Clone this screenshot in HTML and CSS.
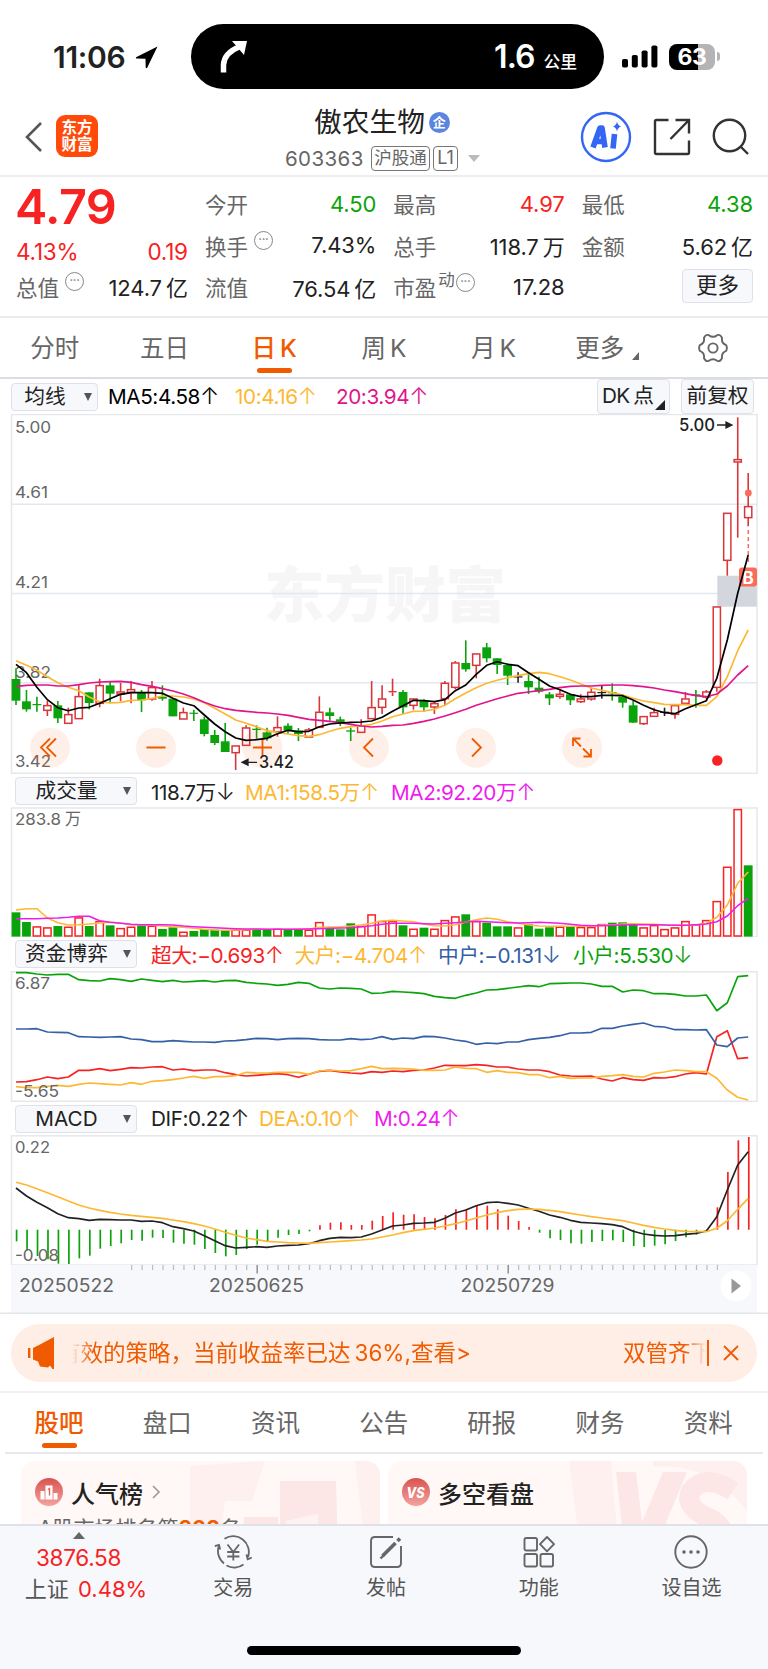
FILE: index.html
```html
<!DOCTYPE html>
<html lang="zh-CN">
<head>
<meta charset="utf-8">
<title>傲农生物 603363</title>
<link rel="stylesheet" href="styles.css">
</head>
<body>
<div class="status">
  <div class="clock"><span>11:06</span>
    <svg width="24" height="24" viewBox="0 0 24 24"><path d="M22.500 1.500 1.500 12c-1 .6-.8 1.500.3 1.600l8.700.2.200 8.500c.1 1.100 1 1.200 1.600.2Z"/></svg>
  </div>
  <div class="island">
    <svg width="30" height="34" viewBox="0 0 30 34"><path d="M4.500 32.500V25Q5 13 20 7" fill="none" stroke="#fff" stroke-width="5.500"/><path d="M13 1h15l-3 14Z" fill="#fff"/></svg>
    <div class="dist"><b>1.6</b><span>公里</span></div>
  </div>
  <div class="signal">
    <svg width="36" height="24" viewBox="0 0 36 24"><rect x="0" y="14" width="6" height="8.500" rx="1.800"/><rect x="9.800" y="10" width="6" height="12.500" rx="1.800"/><rect x="19.600" y="5.500" width="6" height="17" rx="1.800"/><rect x="29.400" y=".5" width="6" height="22" rx="1.800"/></svg>
    <div class="battery"><b>63</b></div><i class="nub"></i>
  </div>
</div>

<header class="top">
  <svg class="back" width="18" height="32" viewBox="0 0 18 32"><path d="M16 2 2 16l14 14" fill="none" stroke="#555" stroke-width="2.600"/></svg>
  <div class="logo">东方<br>财富</div>
  <div class="title">
    <div class="name">傲农生物<span class="qi">企</span></div>
    <div class="code"><span class="num">603363</span><span class="tag">沪股通</span><span class="tag l1">L1</span><i></i></div>
  </div>
  <div class="tools">
    <svg width="52" height="52" viewBox="0 0 52 52"><circle cx="26" cy="26" r="24" fill="none" stroke="#3466f6" stroke-width="2.400"/><g fill="none" stroke="#3466f6" stroke-width="5.600" stroke-linecap="butt" stroke-linejoin="round"><path d="M13 36.500 20 17h2l3 19.500M16 30.500h8M34.500 23l-1.500 14.500"/></g><path d="M37 10.500q.8 4.200 4.300 5-3.500.8-4.300 5-.8-4.200-4.300-5 3.500-.8 4.300-5Z" fill="#3466f6"/></svg>
    <svg width="38" height="38" viewBox="0 0 38 38" fill="none" stroke="#333" stroke-width="2.400"><path d="M15.500 2H3.500Q2 2 2 3.500v31Q2 36 3.500 36h31q1.500 0 1.500-1.500V22.500M22.500 2H36v13.500M36 2 17.500 21"/></svg>
    <svg width="38" height="38" viewBox="0 0 38 38" fill="none" stroke="#333" stroke-width="2.400"><circle cx="17.500" cy="17.500" r="15.700"/><path d="M28.500 28.500 36 36"/></svg>
  </div>
</header>

<section class="quote">
  <div class="q-first">
    <div class="price">4.79</div>
    <div class="chg"><span>4.13%</span><span>0.19</span></div>
    <div class="cell last"><label>总值<i class="tip">···</i></label><span>124.7<u>亿</u></span></div>
  </div>
  <div class="q-col">
    <div class="cell"><label>今开</label><span class="dn">4.50</span></div>
    <div class="cell"><label>换手<i class="tip">···</i></label><span>7.43%</span></div>
    <div class="cell"><label>流值</label><span>76.54<u>亿</u></span></div>
  </div>
  <div class="q-col">
    <div class="cell"><label>最高</label><span class="up">4.97</span></div>
    <div class="cell"><label>总手</label><span>118.7<u>万</u></span></div>
    <div class="cell"><label>市盈<sup>动</sup><i class="tip">···</i></label><span>17.28</span></div>
  </div>
  <div class="q-col">
    <div class="cell"><label>最低</label><span class="dn">4.38</span></div>
    <div class="cell"><label>金额</label><span>5.62<u>亿</u></span></div>
    <div class="cell end"><span class="more">更多</span></div>
  </div>
</section>

<nav class="periods">
  <span>分时</span><span>五日</span><span class="on">日<u>K</u></span><span>周<u>K</u></span><span>月<u>K</u></span><span class="has-sub">更多</span>
  <span><svg width="30" height="30" viewBox="-15 -15 30 30" fill="none" stroke="#666" stroke-width="1.900"><path d="M13.200 2.800Q8.200 4.750 9.030 10.030 7.250 14 4.170 12.840 0 9.500-4.170 12.840-7.250 14-9.030 10.030-8.200 4.750-13.200 2.800-14.500 0-13.200-2.800-8.200-4.750-9.030-10.030-7.250-14-4.170-12.840 0-9.500 4.170-12.840 7.250-14 9.030-10.030 8.200-4.750 13.200-2.800 14.500 0 13.200 2.800Z" stroke-linejoin="round"/><circle r="4.600"/></svg></span>
</nav>

<div class="bar bar-ma">
  <span class="sel s1">均线</span>
  <span class="v black">MA5:4.58<em>↑</em></span><span class="v amber">10:4.16<em>↑</em></span><span class="v pink">20:3.94<em>↑</em></span>
  <span class="btn dk">DK<u>点</u></span><span class="btn">前复权</span>
</div>
<svg id="kline" class="chart" width="768" height="360" viewBox="0 414 768 360"></svg>

<div class="bar bar-vol">
  <span class="sel">成交量</span>
  <span class="v ink">118.7万<em>↓</em></span><span class="v amber">MA1:158.5万<em>↑</em></span><span class="v violet">MA2:92.20万<em>↑</em></span>
</div>
<svg id="volume" class="chart" width="768" height="130" viewBox="0 807 768 130"></svg>

<div class="bar bar-fund">
  <span class="sel">资金博弈</span>
  <span class="v red">超大:−0.693<em>↑</em></span><span class="v amber">大户:−4.704<em>↑</em></span><span class="v blue">中户:−0.131<em>↓</em></span><span class="v green">小户:5.530<em>↓</em></span>
</div>
<svg id="funds" class="chart" width="768" height="131" viewBox="0 971 768 131"></svg>

<div class="bar bar-macd">
  <span class="sel">MACD</span>
  <span class="v ink">DIF:0.22<em>↑</em></span><span class="v amber">DEA:0.10<em>↑</em></span><span class="v violet">M:0.24<em>↑</em></span>
</div>
<svg id="macd" class="chart" width="768" height="179" viewBox="0 1135 768 179"></svg>

<div class="notice-wrap">
  <div class="notice">
    <svg width="28" height="34" viewBox="0 0 28 34" fill="#f05a00"><path d="M0 12h2.400v10H0zM5 12l5-2.500L26 1v32h-1.500L22 29.500l-2 2-8-1-2-5L5 23.500Z"/></svg>
    <div class="marquee"><span class="m1">有效的策略，当前收益率已达<u>36%</u>,查看&gt;</span><span class="m2">双管齐下</span></div>
    <i class="sep"></i>
    <svg width="16" height="16" viewBox="0 0 16 16" stroke="#f05a00" stroke-width="1.800"><path d="M1 1l14 14M15 1 1 15"/></svg>
  </div>
</div>

<nav class="tabs"><span class="on">股吧</span><span>盘口</span><span>资讯</span><span>公告</span><span>研报</span><span>财务</span><span>资料</span></nav>

<div class="cards">
  <div class="card">
    <svg class="deco" width="190" height="93" viewBox="0 0 190 93"><path d="M0 5 75 0 62 40H35L28 93H0ZM165 0h25v93h-14Z" fill="#fdf0ef"/><path d="M90 20h56l2 73H90ZM54 56h34v37H52Z" fill="#fce7e6"/><path d="M96 60l32-7v40h-14V62l-18 6Z" fill="#fff3f1"/></svg>
    <div class="ch"><svg width="28" height="28" viewBox="0 0 28 28"><circle cx="14" cy="14" r="14" fill="url(#rg)"/><path fill="#fff" d="M5.500 13h4v8.500h-4zM18.500 15h4v6.500h-4z"/><path fill="#fff" d="M10.500 7.500h7v14h-7z"/><path d="M13 11.500l1.500-1v7" fill="none" stroke="#e0605c" stroke-width="1.400"/></svg><b>人气榜</b><svg width="10" height="14" viewBox="0 0 10 14"><path d="M2 1l6 6-6 6" fill="none" stroke="#999" stroke-width="1.600"/></svg></div>
    <div class="sub">A股市场排名第<b>308</b>名</div>
  </div>
  <div class="card">
    <svg class="deco" width="178" height="93" viewBox="0 0 178 93"><path d="M0 0h42L50 93H12ZM84 0h94v50Q140 0 84 6Z" fill="#fdf0ef"/><path d="M47 11h20l6 50L94 11h24L84 93H56Z" fill="#fce7e6"/><path d="M164 30q-28-18-42 0-8 16 20 28 22 12 2 36" fill="none" stroke="#fce7e6" stroke-width="20"/></svg>
    <div class="ch"><svg width="28" height="28" viewBox="0 0 28 28"><defs><linearGradient id="rg" x2="0" y2="1"><stop stop-color="#d9534f"/><stop offset="1" stop-color="#f3a39f"/></linearGradient></defs><circle cx="14" cy="14" r="14" fill="url(#rg)"/><text x="13.500" y="19.500" class="vs" textLength="18" lengthAdjust="spacingAndGlyphs">VS</text></svg><b>多空看盘</b></div>
  </div>
</div>

<footer class="dock">
  <div class="index"><i></i><b>3876.58</b><span>上证 <em>0.48%</em></span></div>
  <div class="item"><svg width="38" height="34" viewBox="0 0 38 34" fill="none" stroke="#666" stroke-width="1.800"><path d="M10 28.500A15.700 15.700 0 0 1 5 10.500M.8 11.200 5 9.800l1.200 4.700M10.500 3.800A15.700 15.700 0 0 1 34 22M32.500 19.500l1.200 4.800 4-1.600M29.500 29.500A15.700 15.700 0 0 1 12.500 30.500"/><path d="M13.500 9.500l5.800 7.500 5.800-7.500M13.200 17h12.200M13.200 21.500h12.200M19.300 17v8.500"/></svg><span>交易</span></div>
  <div class="item"><svg width="34" height="34" viewBox="0 0 34 34" fill="none" stroke="#666" stroke-width="1.900"><path d="M24 2H6Q2 2 2 6v22q0 4 4 4h22q4 0 4-4V11"/><path d="M13.500 21 26.500 8M28.500 6l2.500-2.500" stroke-width="3.600"/><path d="M11.500 23.500l3-3" stroke-width="2.400"/></svg><span>发帖</span></div>
  <div class="item"><svg width="32" height="34" viewBox="0 0 32 34" fill="none" stroke="#666" stroke-width="1.900"><rect x="1.500" y="3" width="12.500" height="12.500" rx="1.800"/><rect x="1.500" y="19" width="12.500" height="12.500" rx="1.800"/><rect x="17.500" y="19" width="12.500" height="12.500" rx="1.800"/><path d="M24 2 31 9.200l-7 7.200-7-7.200Z" stroke-linejoin="round"/></svg><span>功能</span></div>
  <div class="item"><svg width="34" height="34" viewBox="0 0 34 34"><circle cx="17" cy="17" r="15.700" fill="none" stroke="#666" stroke-width="1.900"/><g fill="#666"><circle cx="10" cy="17" r="1.800"/><circle cx="17" cy="17" r="1.800"/><circle cx="24" cy="17" r="1.800"/></g></svg><span>设自选</span></div>
  <div class="home"></div>
</footer>
<script src="charts.js"></script>
</body>
</html>
```
FILE: styles.css
```css
* { box-sizing: border-box; }
body { margin: 0; width: 768px; height: 1669px; overflow: hidden; background: #fff; color: #222; font-family: Inter, "Noto Sans CJK SC", sans-serif; display: flex; flex-direction: column; }
body > * { flex: none; }
svg { display: block; }
i, em { font-style: normal; }
u { text-decoration: none; margin-left: 4px; }

.status { height: 103px; display: flex; align-items: flex-start; padding-top: 24px; }
.clock { width: 191px; height: 65px; display: flex; align-items: center; padding-left: 53px; gap: 6px; font-size: 30px; font-weight: 600; letter-spacing: -.3px; }
.clock span { width: 76px; white-space: nowrap; }
.island { width: 413px; height: 65px; border-radius: 33px; background: #000; color: #fff; display: flex; align-items: center; justify-content: space-between; padding: 0 27px 0 28px; }
.dist { display: flex; align-items: baseline; gap: 9px; }
.dist b { font-size: 32px; font-weight: 600; letter-spacing: -1px; }
.dist span { font-size: 16.800px; font-weight: 500; }
.signal { height: 65px; display: flex; align-items: center; padding-left: 18px; }
.battery { margin-left: 11px; width: 46px; height: 26px; border-radius: 8px; background: linear-gradient(90deg, #000 0 63%, #b4b4b6 63%); color: #fff; font-size: 23px; line-height: 26px; text-align: center; }
.battery b { font-weight: 700; letter-spacing: -.5px; }
.nub { width: 3px; height: 9px; margin-left: 2px; border-radius: 0 4px 4px 0; background: #b4b4b6; }

.top { height: 74px; border-bottom: 2px solid #eee; display: flex; padding-left: 25px; }
.back { margin-top: 18px; }
.logo { width: 42px; height: 42px; margin: 12px 0 0 13px; border-radius: 9px; background: #ff4a0a; color: #fff; font-size: 15.500px; font-weight: 700; line-height: 17px; text-align: center; padding-top: 4px; }
.title { width: 290px; margin-left: 141px; display: flex; flex-direction: column; align-items: center; }
.name { display: flex; align-items: center; font-size: 27.700px; line-height: 38px; gap: 4px; padding-right: 4px; }
.qi { width: 21px; height: 21px; border-radius: 50%; background: #5a86e0; color: #fff; font-size: 13px; font-weight: 700; line-height: 20px; text-align: center; }
.code { display: flex; align-items: center; color: #666; font-size: 20.500px; height: 27px; margin-top: 4px; width: 195px; align-self: flex-start; margin-left: 46px; }
.num { width: 84px; letter-spacing: .4px; }
.tag { height: 25px; border: 1.500px solid #777; border-radius: 4px; font-size: 17.500px; line-height: 22px; width: 59px; text-align: center; margin-left: 2px; white-space: nowrap; }
.l1 { width: 25px; font-size: 18px; margin-left: 3px; }
.code i { margin-left: 10px; border: 6px solid transparent; border-top: 7px solid #bbb; border-bottom: 0; }
.tools { display: flex; align-items: center; gap: 21px; margin-left: 51px; height: 67px; }

.quote { height: 141px; border-bottom: 2px solid #ececee; display: flex; padding: 6px 15px 0 17px; gap: 17px; }
.q-first { width: 171px; }
.q-col { width: 171.500px; }
.price { color: #f72222; font-weight: 600; font-size: 48.500px; line-height: 47px; letter-spacing: -.6px; margin-left: -2px; }
.chg { display: flex; justify-content: space-between; color: #f72222; font-size: 22.500px; line-height: 42px; letter-spacing: -.2px; padding-top: 1px; height: 38px; margin-left: -1px; }
.cell { display: flex; justify-content: space-between; align-items: center; height: 42px; font-size: 22px; white-space: nowrap; letter-spacing: -.1px; }
.q-col .cell { height: 41.500px; }
.cell label { color: #666; display: flex; align-items: center; letter-spacing: 0; font-size: 21.500px; }
.tip { width: 19px; height: 19px; border: 1.500px solid #888; border-radius: 50%; margin: -9px 0 0 6px; font-size: 11px; line-height: 15px; letter-spacing: -.3px; text-align: center; font-weight: 700; color: #888; }
sup { font-size: 16.500px; line-height: 16px; margin-top: -14px; margin-left: 2px; }
sup + .tip { margin-left: 1px; }
.cell.last { margin-top: -3px; }
.cell.last label { margin-left: -1px; }
.up { color: #f72222; } .dn { color: #0ba30b; }
.end { justify-content: flex-end; }
.more { width: 71px; height: 34px; border: 1.500px solid #dfe0e8; border-radius: 4px; background: #f7f8fb; text-align: center; line-height: 31px; letter-spacing: 0; font-size: 21.500px; margin-top: -1px; }

.periods { height: 61px; border-bottom: 2px solid #dcdde4; display: flex; color: #666; font-size: 24.500px; line-height: 61px; }
.periods span { width: 109.700px; text-align: center; position: relative; }
.periods span:last-child { display: flex; align-items: center; justify-content: center; }
.periods .on, .tabs .on { color: #f05a00; font-weight: 500; }
.periods .on::after, .tabs .on::after { content: ""; position: absolute; left: 50%; bottom: 4px; width: 35px; height: 5px; margin-left: -17px; border-radius: 3px; background: #f05a00; }
.periods .has-sub { padding-right: 7px; }
.has-sub::after { content: ""; position: absolute; right: 19px; bottom: 17px; border-left: 7px solid transparent; border-bottom: 8px solid #666; }

.bar { height: 34px; display: flex; align-items: center; padding-left: 15px; font-size: 20.700px; white-space: nowrap; }
.bar-ma { height: 35px; padding-left: 11px; }
.bar-vol, .bar-macd { height: 33px; }
.sel { width: 122px; height: 28px; border: 1.500px solid #dfe0e8; border-radius: 4px; background: #f7f8fb; text-align: center; padding-right: 19px; line-height: 25px; position: relative; margin-right: 14px; }
.s1 { width: 87px; margin-right: 10px; }
.sel::after { content: ""; position: absolute; right: 5px; top: 9px; border: 4.500px solid transparent; border-top: 8px solid #555; border-bottom: 0; }
.v { letter-spacing: -.4px; }
.v em { display: inline-block; width: 14px; margin-left: 3px; font-size: 23px; font-weight: 300; line-height: 24px; text-indent: -3px; }
.bar-ma .v { width: 101px; } .bar-ma .black { width: 127px; }
.bar-vol .v { width: 146px; } .bar-vol .ink { width: 94px; }
.bar-fund .v { width: 143.500px; } .bar-fund .blue { width: 135px; }
.bar-macd .v { width: 115px; } .bar-macd .ink { width: 108px; }
.black { color: #000; } .ink { color: #222; } .amber { color: #fdb833; } .pink { color: #e0148c; }
.violet { color: #ee1cee; } .red { color: #f72222; } .blue { color: #3460a4; } .green { color: #0ba30b; }
.btn { height: 35px; border: 1.500px solid #dfe0e8; border-radius: 4px; background: #f7f8fb; width: 73px; text-align: center; line-height: 32px; }
.dk { margin-left: auto; margin-right: 11px; position: relative; text-align: left; padding-left: 4px; letter-spacing: -.8px; }
.dk::after { content: ""; position: absolute; right: 4px; bottom: 3px; border-left: 10px solid transparent; border-bottom: 10px solid #222; }
.btn:last-child { margin-right: 14px; }

.chart text { font-size: 16.500px; fill: #666; }
.chart .wm { font-size: 60px; font-weight: 900; fill: #f6f6f7; }
.chart .mark { font-size: 17px; fill: #222; font-weight: 500; }
.chart .badge { font-size: 17px; fill: #fff; font-weight: 700; text-anchor: middle; }
.chart .date { font-size: 18px; }

.notice-wrap { height: 79px; border-bottom: 2px solid #f0f0f2; padding: 10px 11px 0; }
.notice { height: 58px; border-radius: 29px; background: #feeee6; color: #f05a00; display: flex; align-items: center; padding-left: 17px; }
.marquee { margin-left: 16px; width: 635px; height: 58px; line-height: 57px; display: flex; justify-content: space-between; overflow: hidden; font-size: 22.500px; white-space: nowrap; -webkit-mask-image: linear-gradient(90deg, transparent, #000 20px, #000 613px, transparent 634px); mask-image: linear-gradient(90deg, transparent, #000 20px, #000 613px, transparent 634px); }
.m1 { margin-left: -14px; }
.m2 { margin-right: -6px; }
.sep { width: 1.500px; height: 26px; background: #f05a00; margin: 0 14px 0 0; }

.tabs { height: 61px; margin: 0 5px; border-bottom: 2px solid #e8e8ec; display: flex; color: #666; font-size: 24.500px; line-height: 61px; }
.tabs span { width: 108.200px; text-align: center; position: relative; }

.cards { height: 70px; overflow: hidden; display: flex; gap: 8px; padding: 7px 21px 0; }
.card { width: 359px; height: 93px; border-radius: 14px; background: #fff8f6; position: relative; overflow: hidden; padding: 17px 0 0 14px; }
.deco { position: absolute; right: 0; top: 0; }
.ch { display: flex; align-items: center; gap: 8px; height: 28px; font-size: 24px; position: relative; }
.ch b { font-weight: 500; }
.vs { font-size: 14px; font-weight: 800; font-style: italic; fill: #fff; text-anchor: middle; }
.sub { margin: 8px 0 0 3px; font-size: 21px; line-height: 30px; color: #666; position: relative; }
.sub b { color: #f05a00; }

.dock { height: 145px; border-top: 2px solid #dfe0e8; background: #f7f8fb; position: relative; display: flex; color: #555; font-size: 20px; }
.index { width: 157px; display: flex; flex-direction: column; align-items: center; font-size: 22.500px; }
.index i { margin-top: 6px; border: 6px solid transparent; border-bottom: 7px solid #666; border-top: 0; }
.index b { font-weight: 400; color: #f72222; line-height: 26px; margin-top: 6px; letter-spacing: -.3px; }
.index span { line-height: 32px; margin-top: 2px; white-space: nowrap; padding-left: 15px; font-size: 22px; }
.index em { color: #f72222; margin-left: 3px; }
.item { width: 152.700px; display: flex; flex-direction: column; align-items: center; padding-top: 9px; }
.item span { line-height: 30px; margin-top: 4px; }
.home { position: absolute; left: 247px; top: 120px; width: 274px; height: 9px; border-radius: 5px; background: #000; }
```
FILE: charts.js
```js
const STEP = 10.46, X0 = 16;
const RED = '#d9363a', HOT = '#f72222', GREEN = '#0ba30b', AMBER = '#fdb833', PINK = '#e0148c', VIOLET = '#ee1cee', BLUE = '#3460a4';
const px = i => X0 + i * STEP;
const rows = s => s.trim().split(/\s+/);
const nums = s => rows(s).map(Number);
const rect = (x, y, w, h, a) => `<rect x="${x.toFixed(2)}" y="${y.toFixed(2)}" width="${w}" height="${h.toFixed(2)}" ${a}/>`;
const seg = (x1, y1, x2, y2, c, w = 1.4) => `<path d="M${x1} ${y1}L${x2} ${y2}" stroke="${c}" stroke-width="${w}" fill="none"/>`;
const line = (vals, base, c, w = 1.7) => `<polyline fill="none" stroke="${c}" stroke-width="${w}" stroke-linejoin="round" points="${vals.map((v, i) => px(i).toFixed(1) + ',' + (base + v / 3).toFixed(1)).join(' ')}"/>`;
const label = (x, y, t, w, cls = '') => `<text x="${x}" y="${y}" class="${cls}" textLength="${w}" lengthAdjust="spacingAndGlyphs">${t}</text>`;
const frame = (y, h) => rect(11.5, y, 745.5, h, 'fill="none" stroke="#e6e7ea" stroke-width="1.5"');

// Each candle: colour, high, body top, body bottom, low.
const candles = rows(`g775,807,872,885 g840,874,898,905 g860,882,885,905 r872,886,901,918 g873,886,925,939 r893,913,940,940 r825,859,926,926 g847,847,879,898 r806,826,880,892 g813,826,851,878
r819,845,852,874 r813,838,847,880 g840,846,871,906 r813,832,867,872 g826,860,866,872 g866,866,919,919 r893,907,927,927 g899,908,911,933 g920,928,972,979 g960,975,999,1005
g939,994,1026,1026 r1007,1007,1028,1080 r946,953,1006,1006 g946,956,960,986 g953,967,985,992 r919,952,965,980 g940,947,962,972 g954,962,972,993 r954,959,981,981 r859,906,952,952
g893,907,918,932 g920,928,939,948 g953,961,965,993 r928,947,967,967 r813,892,926,926 r826,866,892,912 r806,845,847,858 g840,846,892,912 r866,866,886,899 g868,873,892,905
r874,880,891,912 r813,819,866,885 r753,758,832,838 g691,759,778,785 r731,731,766,805 g699,712,745,757 g745,745,765,792 g760,765,797,825 k787,799,800,818 g793,813,832,852
g800,833,845,850 g846,853,865,885 r840,852,859,866 g852,853,871,885 r853,866,875,879 r832,846,867,872 k828,846,848,866 g820,846,850,872 g853,860,878,893 g872,886,938,938
r918,919,941,945 r893,907,919,919 k893,905,908,918 r886,886,913,926 r846,866,880,880 g840,853,856,893 r840,845,861,868 r590,590,832,845 r309,309,451,497 r22,148,156,383 r189,289,323,349`);
const ma5 = nums('763 788 832 869 893 902 894 892 880 866 853 848 848 848 850 865 879 887 915 942 965 984 991 989 985 971 961 965 964 950 942 939 937 936 933 922 904 887 871 872 875 869 842 825 793 766 755 763 767 788 808 828 839 853 860 860 856 856 857 870 886 899 908 911 896 884 872 805 690 550 435');
const ma10 = nums('752 766 781 800 818 832 842 861 875 879 877 871 870 865 858 858 861 867 878 895 912 930 940 950 962 967 972 977 979 974 964 955 950 948 943 933 920 912 904 903 898 886 866 849 833 820 811 803 797 791 787 791 800 810 822 834 841 848 855 865 873 878 883 884 884 886 886 860 800 722 660');
const ma20 = nums('829 826 825 825 828 828 824 819 816 815 814 817 824 829 836 843 852 863 877 888 896 901 904 907 909 912 916 922 928 931 934 938 943 948 951 949 946 945 940 934 927 918 908 898 886 876 866 858 850 846 842 838 833 829 828 828 826 825 825 827 830 834 840 845 851 857 860 852 828 795 767');

function drawKline() {
  const B = 410;
  let s = label(264, 617, '东方财富', 242, 'wm') + frame(414.5, 358.8);
  for (const y of [504.3, 593.6, 682.7]) s += seg(11, y, 757, y, '#e1e8f0', 1.5);
  s += rect(717.3, 575.7, 39.5, 31, 'fill="#d3d7dd"');
  candles.forEach((c, i) => {
    const [h, t, b, l] = c.slice(1).split(',').map(v => B + v / 3), x = px(i);
    if (c[0] === 'r') {
      s += seg(x, h, x, t, RED, 1.6) + seg(x, b, x, l, RED, 1.6);
      s += b - t < 1.5 ? seg(x - 4, t, x + 4, t, RED) : rect(x - 3.6, t + .3, 7.2, b - t - .3, `fill="#fff" stroke="${RED}" stroke-width="1.5"`);
    } else {
      const col = c[0] === 'g' ? GREEN : '#222';
      s += seg(x, h, x, l, col, 1.6) + rect(x - 4.4, t, 8.8, Math.max(b - t, 1.2), `fill="${col}"`);
    }
  });
  s += seg(748.3, 530, 748.3, 563, '#fa6b5c', 1.5).replace('/>', ' stroke-dasharray="4 3"/>');
  s += '<circle cx="748.300" cy="493" r="3.400" fill="#fa6b5c"/>' + rect(739, 567.500, 18, 19, 'rx="3" fill="#fa6b5c"') + '<text class="badge" x="748" y="583.500">B</text>';
  s += label(15, 432.5, '5.00', 36) + label(15, 498, '4.61', 33) + label(15, 587.5, '4.21', 33) + label(15, 677.5, '3.82', 36) + label(15, 767, '3.42', 36);
  for (const x of [50, 156, 262.500, 369, 476, 582]) s += `<circle cx="${x}" cy="747.700" r="20" fill="#f96a1a" fill-opacity=".1"/>`;
  s += '<g fill="none" stroke="#f05a00" stroke-width="1.800"><path d="M50 738.500l-9 9 9 9M56 738.500l-9 9 9 9M146.500 747.500h19M253 747.500h19M262.500 738v19M373 738.500l-9 9 9 9M472 738.500l9 9-9 9M573 746v-7.500h7.500M573 738.500l8 8M591 749v7.500h-7.500M591 756.500l-8-8"/></g>';
  s += line(ma10, B, AMBER) + line(ma20, B, PINK) + line(ma5, B, '#000');
  s += label(259, 768, '3.42', 35, 'mark') + '<path d="M243 762.300h14M242 762.300l6-3v6Z" stroke="#222" stroke-width="1.300" fill="#222"/>';
  s += label(679, 431, '5.00', 36, 'mark') + '<path d="M717 425h13M732 425l-6-3v6Z" stroke="#222" stroke-width="1.300" fill="#222"/>';
  s += '<circle cx="717.300" cy="760.500" r="5.200" fill="#f72222"/>';
  kline.innerHTML = s;
}

const vols = rows('g817 g846 r859 r862 g858 r860 r832 g858 r843 g856 r864 r860 g856 r857 g867 g862 r875 g873 g868 g869 g870 r869 r869 g869 g870 r866 g869 g870 r869 r846 g864 g868 g850 r858 r823 r843 r843 g856 r866 g863 r866 r840 r829 g823 r843 g848 g859 g859 r862 g853 g866 g862 r860 g861 r861 r861 r852 g848 g847 g854 r862 r855 r867 r862 r843 r853 r840 r783 r680 r507 g676');
const vma1 = nums('810 806 806 834 848 855 854 852 849 847 849 854 855 856 858 860 862 865 868 870 871 870 869 868 868 868 868 867 867 862 861 860 858 855 850 843 841 843 845 852 857 858 854 846 839 834 838 845 850 855 858 859 859 859 859 858 855 855 852 851 852 853 855 856 856 855 850 832 795 730 696');
const vma2 = nums('836 836 836 835 834 832 829 829 842 847 850 853 854 854 854 855 858 860 862 863 865 866 867 867 868 868 868 868 867 866 865 864 863 860 857 853 850 850 850 851 852 850 848 846 844 845 847 848 849 848 847 848 850 853 856 857 857 856 855 854 854 854 855 856 856 854 852 845 828 797 775');
function drawVolume() {
  const B = 640, base = 936.6;
  let s = frame(808, 129);
  vols.forEach((v, i) => {
    const y = B + v.slice(1) / 3, x = px(i);
    s += v[0] === 'g' ? rect(x - 4.4, y, 8.8, base - y, `fill="${GREEN}"`) : rect(x - 3.700, y + .6, 7.4, base - y - 1.2, `fill="#fff" stroke="${HOT}" stroke-width="1.500"`);
  });
  volume.innerHTML = s + line(vma1, B, AMBER, 1.6) + line(vma2, B, VIOLET, 1.6) + label(15, 825, '283.8', 46) + label(65, 825, '万', 16);
}

const fund = [
  [GREEN, '98 98 102 105 103 103 119 122 123 116 119 124 117 121 125 121 126 124 122 126 122 121 127 130 132 136 133 127 130 144 147 144 145 147 160 159 154 156 158 161 169 173 175 166 159 150 149 145 141 137 140 131 130 129 129 132 139 139 156 150 152 161 161 163 168 168 165 212 188 110 107'],
  [HOT, '426 425 419 411 416 411 391 391 386 392 388 383 384 381 380 390 387 392 390 390 398 404 408 406 403 401 404 412 403 394 391 396 399 401 395 397 393 395 391 390 384 376 377 377 374 376 381 381 387 390 390 395 405 408 409 408 417 423 413 419 421 413 414 410 402 398 402 290 272 356 353'],
  [AMBER, '440 443 443 439 436 439 433 429 431 433 435 428 433 424 422 419 414 409 415 410 410 407 397 399 399 397 397 397 403 393 390 393 392 386 379 386 385 386 387 391 391 390 381 385 386 397 392 397 398 404 404 413 409 415 414 414 409 407 404 409 411 400 396 390 392 395 395 415 450 472 480'],
  [BLUE, '267 267 266 276 277 278 290 291 292 291 290 297 299 305 305 302 304 306 306 307 303 302 299 295 296 299 296 295 296 299 300 300 296 299 297 290 298 294 296 289 290 294 300 304 313 309 311 306 306 299 295 292 287 279 279 277 265 265 258 253 249 259 261 269 269 270 269 315 320 294 291']
];
function drawFunds() {
  funds.innerHTML = frame(971.8, 129.5) + fund.map(([c, v]) => line(nums(v), 940, c)).join('') + label(15, 988.5, '6.87', 35) + label(15, 1097, '-5.65', 44);
}

const hist = nums('424 452 468 478 491 492 475 467 446 438 430 420 422 413 414 428 431 434 447 459 469 465 447 434 424 413 405 402 394 376 368 367 375 375 362 348 337 344 343 351 355 345 328 328 317 317 328 347 363 381 398 415 420 430 431 426 423 421 426 438 441 437 433 423 412 404 391 322 216 121 111');
const dif = nums('264 288 307 323 341 353 356 361 358 359 360 360 364 363 368 380 386 393 407 422 437 444 442 440 442 438 436 435 431 422 415 412 413 411 402 390 378 375 370 369 367 355 339 330 317 308 306 310 315 325 334 345 352 361 367 369 371 374 380 394 402 406 408 407 403 400 393 350 270 195 155');
const dea = nums('247 255 266 278 290 303 315 324 331 337 342 346 349 352 355 360 365 371 378 387 397 406 414 419 424 426 428 429 430 428 426 424 422 420 417 411 405 398 392 388 384 378 371 363 354 345 338 332 328 327 328 331 335 340 345 350 354 358 362 369 376 382 387 391 394 395 395 385 362 328 295');
function drawMacd() {
  const B = 1100, zero = 1229.7;
  let s = frame(1135.8, 129) + rect(11, 1264.7, 746, 48.5, 'fill="#f7f8fb"') + seg(0, 1313.3, 768, 1313.3, '#e4e5ea', 1.4);
  hist.forEach((v, i) => { s += seg(px(i) + .6, zero, px(i) + .6, B + v / 3, v > 389 ? GREEN : HOT, 1.7); });
  for (let i = 11; i < 68; i++) s += i === 23 || i === 47 ? seg(px(i) + .6, 1265, px(i) + .6, 1273.500, '#888') : seg(px(i) + .6, 1265, px(i) + .6, 1270, '#bbb', 1.2);
  s += line(dif, B, '#222') + line(dea, B, AMBER) + label(15, 1152.5, '0.22', 35) + label(15, 1260.5, '-0.08', 44);
  s += label(19, 1291.5, '20250522', 95, 'date') + label(209, 1291.5, '20250625', 95, 'date') + label(460.500, 1291.5, '20250729', 94, 'date');
  s += '<circle cx="736" cy="1286" r="15.500" fill="#fff"/><path d="M731.500 1278.500l9.500 7.500-9.500 7.500Z" fill="#999"/>';
  macd.innerHTML = s;
}
const kline = document.getElementById('kline'), volume = document.getElementById('volume'), funds = document.getElementById('funds'), macd = document.getElementById('macd');
drawKline(); drawVolume(); drawFunds(); drawMacd();
```
